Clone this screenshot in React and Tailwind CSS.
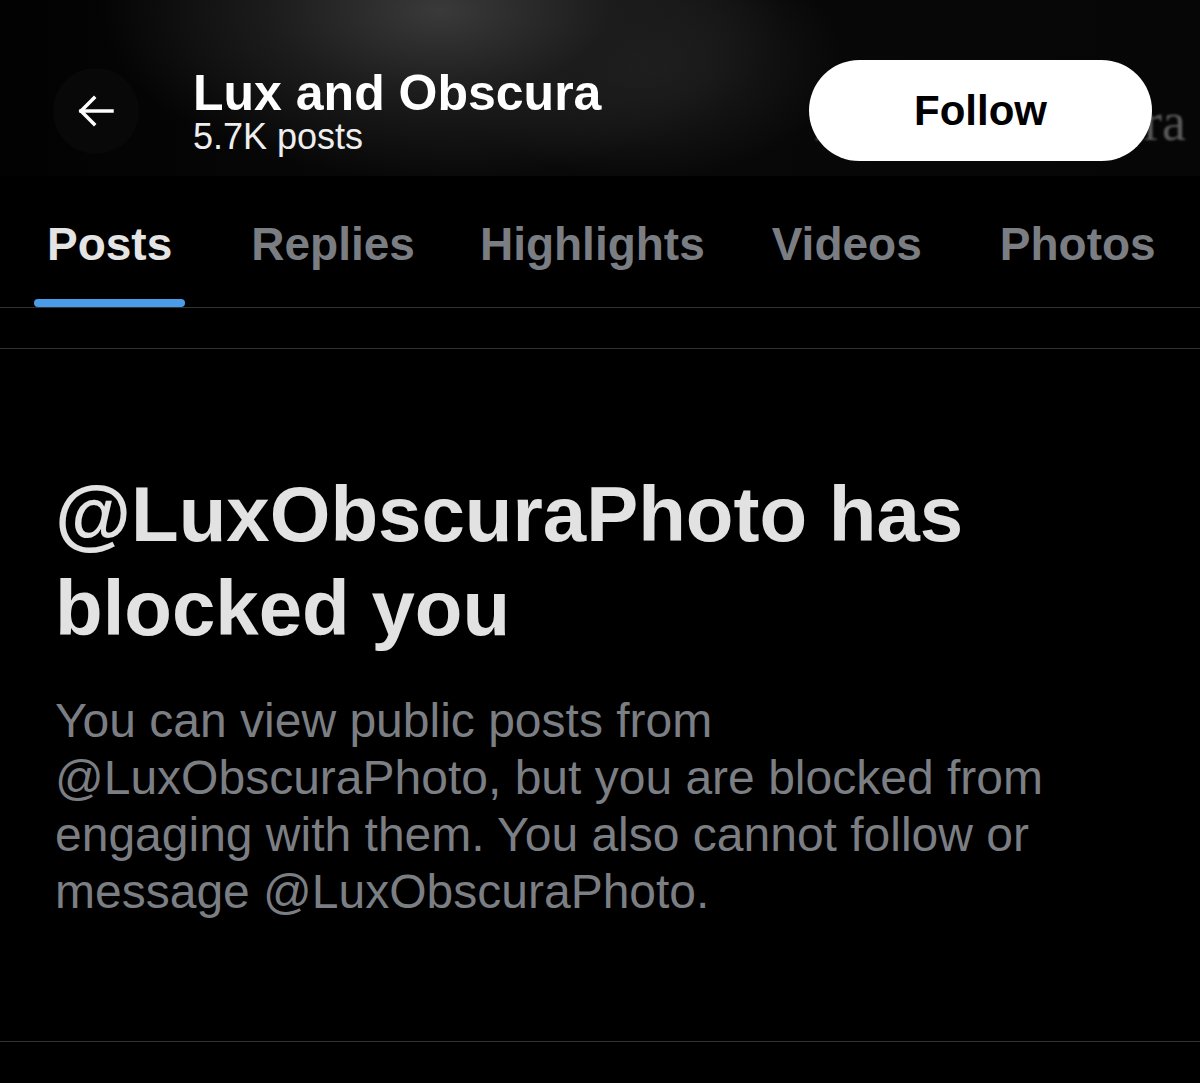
export default function App() {
  const tabs = [
    { label: 'Posts', gap: '' },
    { label: 'Replies', gap: 'ml-[53px]' },
    { label: 'Highlights', gap: 'ml-[39px]' },
    { label: 'Videos', gap: 'ml-[41px]' },
    { label: 'Photos', gap: 'ml-[52px]' },
  ];

  return (
    <div className="min-h-screen w-[1200px] bg-black font-['Liberation_Sans',Arial,sans-serif] text-white">
      {/* Header with blurred banner behind */}
      <header className="relative h-[176px] overflow-hidden bg-[radial-gradient(ellipse_340px_170px_at_440px_10px,#3a3a3a_0%,#1c1c1c_50%,transparent_100%),radial-gradient(ellipse_200px_120px_at_640px_60px,#222222_0%,transparent_100%),linear-gradient(90deg,#020202,#090909_40%,#060606)]">
        <span className="absolute left-[814px] top-[92px] font-['Liberation_Serif',serif] text-[54px] leading-[60px] text-[#5a5a5a] blur-[1px]">
          Lux and Obscura
        </span>
        <div className="relative flex items-center pt-[60px] pl-[53px] pr-[48px]">
          <button className="flex h-[86px] w-[86px] items-center justify-center rounded-full bg-[#080808]">
            <svg width="36" height="32" viewBox="0 0 36 32" fill="none" stroke="white" strokeWidth="3.5" strokeLinecap="square">
              <path d="M34 16H3" />
              <path d="M16 3 3 16l13 13" />
            </svg>
          </button>
          <div className="ml-[54px] flex flex-col">
            <h1 className="text-[50px] font-bold leading-[52px] text-white">Lux and Obscura</h1>
            <p className="text-[36px] leading-[36px] text-[#eeeeee]">5.7K posts</p>
          </div>
          <button className="ml-auto flex h-[101px] w-[343px] items-center justify-center rounded-full bg-white text-[42px] font-bold text-black">
            Follow
          </button>
        </div>
      </header>

      {/* Tabs */}
      <nav className="flex h-[132px] border-b border-[#2f3336] pl-[34px]">
        {tabs.map((tab, i) => (
          <div key={tab.label} className={`flex h-full flex-col justify-between pt-[40px] ${tab.gap}`}>
            <span className={`px-[13px] text-[46px] font-bold leading-[56px] ${i === 0 ? 'text-[#e4e4e4]' : 'text-[#7a7d82]'}`}>
              {tab.label}
            </span>
            <div className={`h-[8px] rounded-full ${i === 0 ? 'bg-[#4a9be8]' : 'bg-transparent'}`}></div>
          </div>
        ))}
      </nav>

      <div className="h-[41px] border-b border-[#2f3336]"></div>

      {/* Blocked notice */}
      <section className="border-b border-[#2f3336] pl-[55px] pt-[118px] pb-[121px]">
        <h2 className="text-[78px] font-bold leading-[94px] text-[#e2e2e2]">
          @LuxObscuraPhoto has
          <br />
          blocked you
        </h2>
        <p className="mt-[37px] text-[48px] leading-[57px] text-[#7b7e83]">
          You can view public posts from
          <br />
          @LuxObscuraPhoto, but you are blocked from
          <br />
          engaging with them. You also cannot follow or
          <br />
          message @LuxObscuraPhoto.
        </p>
      </section>
    </div>
  );
}
